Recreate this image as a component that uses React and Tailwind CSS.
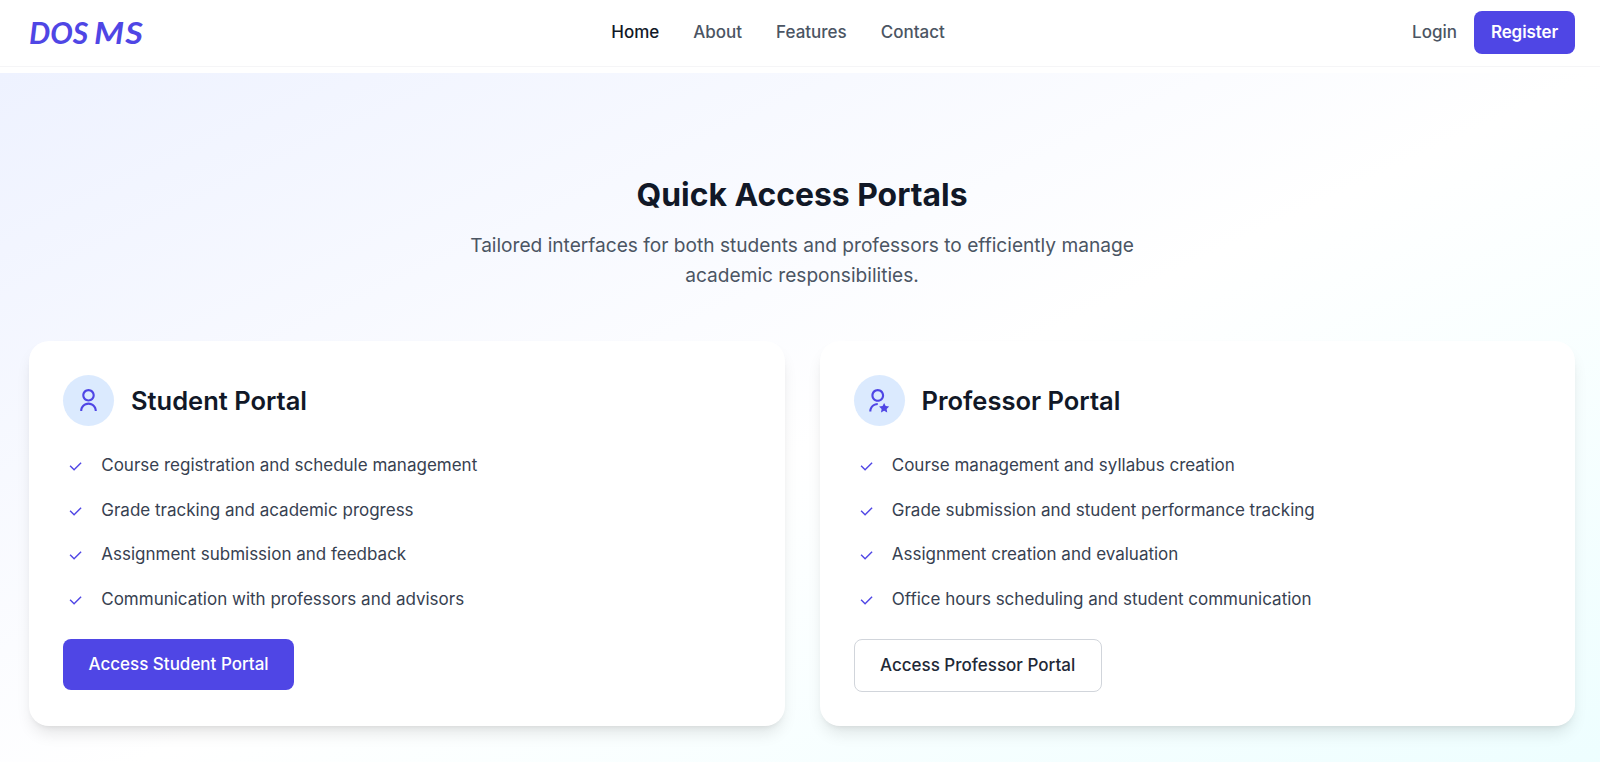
import { RiUserLine, RiUserStarLine, RiCheckLine } from "react-icons/ri";

const portals = [
  {
    title: "Student Portal",
    Icon: RiUserLine,
    iconClass: "size-[25px]",
    items: [
      "Course registration and schedule management",
      "Grade tracking and academic progress",
      "Assignment submission and feedback",
      "Communication with professors and advisors",
    ],
    action: "Access Student Portal",
    button: "bg-[#4f46e5] text-white",
  },
  {
    title: "Professor Portal",
    Icon: RiUserStarLine,
    iconClass: "mr-[3px] size-[25.5px]",
    items: [
      "Course management and syllabus creation",
      "Grade submission and student performance tracking",
      "Assignment creation and evaluation",
      "Office hours scheduling and student communication",
    ],
    action: "Access Professor Portal",
    button: "border border-[#d1d5db] bg-white text-[#1f2937]",
  },
];

function Header() {
  return (
    <header className="flex h-[67px] shrink-0 items-center justify-between border-b border-[#f5f5f7] bg-white pr-[25px] pb-px pl-[29px] text-[17px] leading-[25.5px] font-medium text-[#4b5563]">
      <a className="flex w-[115px] gap-[6px] pb-[2px] font-['Lato','Inter',sans-serif] text-[30px] leading-[34px] font-bold whitespace-nowrap text-[#4f46e5] italic">
        <span>DOS</span>
        <span className="origin-left scale-x-[1.14] tracking-[1px]">MS</span>
      </a>
      <nav className="flex gap-[34px]">
        <a className="text-[#111827]">Home</a>
        <a>About</a>
        <a>Features</a>
        <a>Contact</a>
      </nav>
      <div className="flex items-center gap-[17px]">
        <a>Login</a>
        <a className="w-[101px] rounded-lg bg-[#4f46e5] py-[8.5px] text-center font-semibold tracking-[-0.1px] text-white">
          Register
        </a>
      </div>
    </header>
  );
}

function PortalCard({ title, Icon, iconClass, items, action, button }) {
  return (
    <article className="flex flex-col items-start rounded-[20px] bg-white p-[34px] shadow-[0_10px_16px_-3px_rgba(0,0,0,0.1),0_4px_6px_-4px_rgba(0,0,0,0.1)]">
      <div className="flex items-center gap-[17px]">
        <div className="flex size-[51px] items-center justify-center rounded-full bg-[#dbeafe] text-[#4f46e5]">
          <Icon className={iconClass} />
        </div>
        <h3 className="text-[25.5px] leading-[34px] font-semibold text-[#111827]">{title}</h3>
      </div>
      <ul className="mt-[25.5px] flex flex-col gap-[17px] text-[17px] leading-[27.5px] text-[#374151]">
        {items.map((item) => (
          <li key={item} className="flex h-[27.7px] items-start gap-[12.75px]">
            <span className="flex h-[29px] w-[25.5px] items-center justify-center text-[#4f46e5]">
              <RiCheckLine className="size-[17px]" />
            </span>
            {item}
          </li>
        ))}
      </ul>
      <a className={`mt-[25.2px] rounded-lg px-[25.5px] py-[12.7px] text-[17px] leading-[25.5px] font-medium ${button}`}>
        {action}
      </a>
    </article>
  );
}

export default function App() {
  return (
    <div className="flex h-[762px] flex-col overflow-hidden bg-white font-['Inter',sans-serif]">
      <Header />
      <main className="mt-[6px] h-[755px] shrink-0 bg-linear-to-br from-[#eef2ff] via-white to-[#ecfeff] pt-[102.7px] pr-[25px] pl-[29px]">
        <div className="mx-auto flex max-w-[714px] flex-col items-center text-center">
          <h2 className="text-[31.875px] leading-[38.25px] font-bold text-[#111827]">Quick Access Portals</h2>
          <p className="mt-[17.3px] text-[19.125px] leading-[29.75px] text-[#4b5563]">
            Tailored interfaces for both students and professors to efficiently manage academic responsibilities.
          </p>
        </div>
        <div className="mt-[50.7px] grid grid-cols-2 gap-[35px]">
          {portals.map((portal) => (
            <PortalCard key={portal.title} {...portal} />
          ))}
        </div>
      </main>
    </div>
  );
}
